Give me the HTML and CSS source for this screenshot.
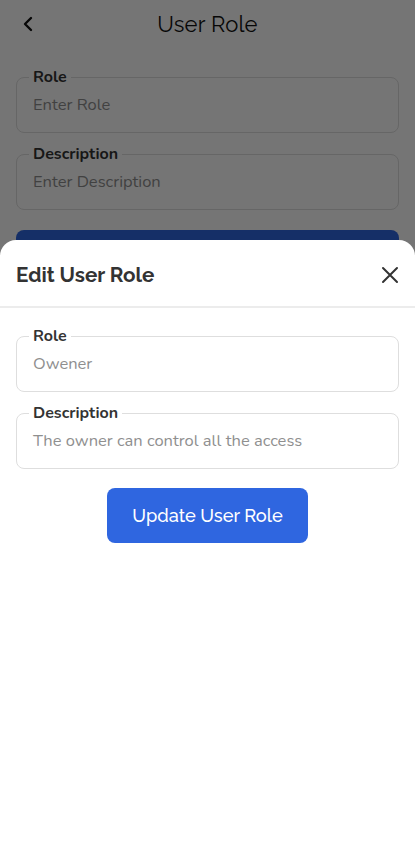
FILE: index.html
```html
<!DOCTYPE html>
<html>
<head>
<meta charset="utf-8">
<link rel="stylesheet" href="styles.css">
</head>
<body>
<div class="page">
  <header class="topbar">
    <button class="back" aria-label="Back">
      <svg width="14" height="16" viewBox="0 0 14 16"><path d="M10 2 L4 8 L10 14" fill="none" stroke="#111" stroke-width="2.4" stroke-linecap="round" stroke-linejoin="round"/></svg>
    </button>
    <h1 class="title">User Role</h1>
  </header>
  <form class="form">
    <fieldset class="field">
      <legend>Role</legend>
      <div class="value placeholder">Enter Role</div>
    </fieldset>
    <fieldset class="field">
      <legend>Description</legend>
      <div class="value placeholder">Enter Description</div>
    </fieldset>
    <div class="wide-btn">Add User Role</div>
  </form>
</div>

<div class="overlay">
  <section class="sheet">
    <div class="sheet-head">
      <h2 class="sheet-title">Edit User Role</h2>
      <button class="close" aria-label="Close">
        <svg width="18" height="18" viewBox="0 0 18 18"><path d="M2 2 L16 16 M16 2 L2 16" stroke="#333" stroke-width="2" stroke-linecap="round"/></svg>
      </button>
    </div>
    <div class="sheet-body">
      <fieldset class="field">
        <legend>Role</legend>
        <div class="value">Owener</div>
      </fieldset>
      <fieldset class="field">
        <legend>Description</legend>
        <div class="value">The owner can control all the access</div>
      </fieldset>
      <div class="actions">
        <button class="primary">Update User Role</button>
      </div>
    </div>
  </section>
</div>
</body>
</html>
```
FILE: styles.css
```css
* { box-sizing: border-box; }
html, body { margin: 0; padding: 0; }
body {
  width: 415px;
  height: 865px;
  overflow: hidden;
  background: #fff;
  font-family: "Nunito", "Lato", "Noto Sans", sans-serif;
  position: relative;
}
.page { padding: 0 16px; }
.topbar {
  height: 48px;
  display: flex;
  align-items: center;
  justify-content: center;
  position: relative;
}
.back {
  position: absolute;
  left: 5px;
  top: 16px;
  background: none;
  border: 0;
  padding: 0;
  width: 14px;
  height: 16px;
}
.title {
  margin: 0;
  font-family: "Raleway", "Lato", sans-serif;
  font-weight: 400;
  font-size: 22px;
  color: #111;
  letter-spacing: 0.2px;
}
.form { padding-top: 19px; }
.field {
  margin: 0 0 11px 0;
  border: 1px solid #dedede;
  border-radius: 8px;
  padding: 0 16px 16px;
  min-width: 0;
}
.field legend {
  padding: 0 4px;
  margin-left: -4px;
  font-weight: 700;
  font-size: 16px;
  line-height: 20px;
  color: #333;
}
.value {
  padding-top: 7px;
  font-size: 16.5px;
  line-height: 22px;
  color: #8f8f8f;
}
.wide-btn {
  margin-top: 20px;
  height: 55px;
  border-radius: 8px;
  background: #2f66e0;
  color: #fff;
  display: flex;
  align-items: center;
  justify-content: center;
  font-family: "Raleway", "Lato", sans-serif;
  font-size: 18px;
}
.overlay {
  position: absolute;
  inset: 0;
  background: rgba(0,0,0,0.54);
  display: flex;
  flex-direction: column;
  justify-content: flex-end;
}
.sheet {
  height: 625px;
  background: #fff;
  border-radius: 16px 16px 0 0;
}
.sheet-head {
  height: 68px;
  display: flex;
  align-items: center;
  justify-content: space-between;
  padding: 0 16px;
  border-bottom: 2px solid #ececec;
}
.sheet-title {
  margin: 4px 0 0;
  font-family: "Raleway", "Lato", sans-serif;
  font-weight: 700;
  font-size: 20.6px;
  color: #333;
}
.close {
  background: none;
  border: 0;
  padding: 0;
  width: 18px;
  height: 18px;
  margin: 4px 0 0;
}
.sheet-body { padding: 18px 16px 0; }
.actions {
  display: flex;
  justify-content: center;
  padding-top: 8px;
}
.primary {
  width: 201px;
  height: 55px;
  border: 0;
  border-radius: 8px;
  background: #2f66e0;
  color: #fff;
  font-family: "Raleway", "Lato", sans-serif;
  font-size: 18.2px;
  font-weight: 500;
}
```
